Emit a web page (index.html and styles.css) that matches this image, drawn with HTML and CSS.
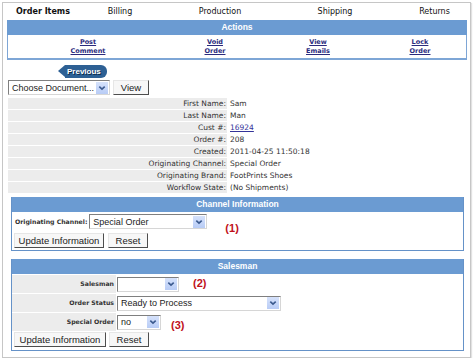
FILE: index.html
```html
<!DOCTYPE html>
<html lang="en">
<head>
    <meta charset="UTF-8">
    <title>Order Items</title>
    <link rel="stylesheet" href="styles.css">
</head>
<body>
    <div class="frame">
        <div class="tabs">
            <span class="tab tab-on">Order Items</span>
            <span class="tab">Billing</span>
            <span class="tab">Production</span>
            <span class="tab">Shipping</span>
            <span class="tab tab-last">Returns</span>
        </div>

        <div class="panel">
            <div class="panel-head">Actions</div>
            <div class="action-links">
                <a href="#">Post<br>Comment</a>
                <a href="#">Void<br>Order</a>
                <a href="#">View<br>Emails</a>
                <a href="#">Lock<br>Order</a>
            </div>
        </div>

        <div class="prev-row">
            <span class="prev"><span class="prev-tip"></span><span class="prev-body">Previous</span></span>
        </div>

        <div class="doc-row">
            <div class="dd dd-doc">
                <span>Choose Document...</span>
                <span class="dd-btn"><svg width="8" height="8" viewBox="0 0 8 8"><path d="M1.3 2.6 L4 5.2 L6.7 2.6" fill="none" stroke="#3b5a8e" stroke-width="1.6"/></svg></span>
            </div>
            <button class="btn btn-view">View</button>
        </div>

        <div class="info">
            <span class="k">First Name:</span><span class="v">Sam</span>
            <span class="k">Last Name:</span><span class="v">Man</span>
            <span class="k">Cust #:</span><span class="v"><a href="#" class="cust">16924</a></span>
            <span class="k">Order #:</span><span class="v">208</span>
            <span class="k">Created:</span><span class="v">2011-04-25 11:50:18</span>
            <span class="k">Originating Channel:</span><span class="v">Special Order</span>
            <span class="k">Originating Brand:</span><span class="v">FootPrints Shoes</span>
            <span class="k">Workflow State:</span><span class="v">(No Shipments)</span>
        </div>

        <!-- channel -->
        <div class="box box-channel">
            <div class="panel-head">Channel Information</div>
            <div class="channel-body">
                <span class="field-label">Originating Channel:</span>
                <div class="dd dd-channel">
                    <span>Special Order</span>
                    <span class="dd-btn"><svg width="8" height="8" viewBox="0 0 8 8"><path d="M1.3 2.6 L4 5.2 L6.7 2.6" fill="none" stroke="#3b5a8e" stroke-width="1.6"/></svg></span>
                </div>
                <span class="mark mark-1">(1)</span>
                <div class="btn-row">
                    <button class="btn btn-update">Update Information</button>
                    <button class="btn btn-reset">Reset</button>
                </div>
            </div>
        </div>

        <!-- salesman -->
        <div class="box box-sales">
            <div class="panel-head">Salesman</div>
            <div class="sales-body">
                <span class="s-label">Salesman</span>
                <div class="s-ctrl">
                    <div class="dd dd-sales">
                        <span></span>
                        <span class="dd-btn"><svg width="8" height="8" viewBox="0 0 8 8"><path d="M1.3 2.6 L4 5.2 L6.7 2.6" fill="none" stroke="#3b5a8e" stroke-width="1.6"/></svg></span>
                    </div>
                    <span class="mark mark-2">(2)</span>
                </div>

                <span class="s-label">Order Status</span>
                <div class="s-ctrl">
                    <div class="dd dd-status">
                        <span>Ready to Process</span>
                        <span class="dd-btn"><svg width="8" height="8" viewBox="0 0 8 8"><path d="M1.3 2.6 L4 5.2 L6.7 2.6" fill="none" stroke="#3b5a8e" stroke-width="1.6"/></svg></span>
                    </div>
                </div>

                <span class="s-label">Special Order</span>
                <div class="s-ctrl">
                    <div class="dd dd-special">
                        <span>no</span>
                        <span class="dd-btn"><svg width="8" height="8" viewBox="0 0 8 8"><path d="M1.3 2.6 L4 5.2 L6.7 2.6" fill="none" stroke="#3b5a8e" stroke-width="1.6"/></svg></span>
                    </div>
                    <span class="mark mark-3">(3)</span>
                </div>

                <div class="btn-row btn-row-sales">
                    <button class="btn btn-update2">Update Information</button>
                    <button class="btn btn-reset">Reset</button>
                </div>
            </div>
        </div>
    </div>
</body>
</html>
```

FILE: styles.css
```css
* {
    margin: 0;
    padding: 0;
    box-sizing: border-box;
}

body {
    background: #fff;
    font-family: 'DejaVu Sans', Verdana, sans-serif;
    color: #333;
}

.frame {
    margin: 2px 0 0 2px;
    width: 469px;
    height: 356px;
    border: 1px solid #c6c6c6;
    box-shadow: 1px 1px 1px #e2e2e2;
    padding: 0 3px 0 4px;
}

/* tabs */
.tabs {
    display: grid;
    grid-template-columns: 80px 74px 126px 104px 1fr;
    align-items: center;
    height: 17px;
    margin: 0 -3px 0 -4px;
    font-size: 8px;
    color: #111;
    text-align: center;
}

.tab-on {
    font-weight: bold;
}

.tab-last {
    padding-left: 12px;
}

/* panels */
.panel-head {
    background: #6b9bd2;
    color: #fff;
    font: bold 8.5px 'Liberation Sans', Arial, sans-serif;
    text-align: center;
    height: 15px;
    line-height: 15px;
}

.action-links {
    display: grid;
    grid-template-columns: 160px 94px 112px 1fr;
    height: 25px;
    padding-top: 3px;
    border: 1px solid #7ea6d6;
    border-top: 0;
    border-bottom-width: 2px;
    text-align: center;
    font: bold 6.5px/8.5px 'DejaVu Sans', Verdana, sans-serif;
}

.action-links a {
    color: #2b2b7d;
    text-decoration: underline;
}

/* previous button */
.prev-row {
    margin-top: 2px;
    height: 13px;
}

.prev {
    display: inline-flex;
    margin-left: 51px;
    height: 13px;
}

.prev-tip {
    width: 0;
    height: 0;
    border-top: 6.5px solid transparent;
    border-bottom: 6.5px solid transparent;
    border-right: 7px solid #2d6094;
}

.prev-body {
    background: #2d6094;
    border-radius: 0 6px 6px 0;
    color: #fff;
    font: bold 8px/13px 'Liberation Sans', Arial, sans-serif;
    padding: 0 6px 0 2px;
    text-shadow: 1px 1px 0 #0c2a4a;
}

/* selects & buttons */
.doc-row {
    display: flex;
    gap: 3px;
    margin: 5px 0 0 1px;
}

.dd {
    display: flex;
    align-items: center;
    justify-content: space-between;
    height: 15px;
    padding-left: 3px;
    background: #fff;
    border: 1px solid;
    border-color: #7f7f7f #d6d6d6 #d6d6d6 #7f7f7f;
    font: 9px 'Liberation Sans', Arial, sans-serif;
    color: #222;
    white-space: nowrap;
}

.dd-btn {
    display: flex;
    align-items: center;
    justify-content: center;
    width: 12px;
    height: 12px;
    margin-right: 1px;
    background: linear-gradient(#d6e2fb, #b8ccf6);
}

.dd-doc { width: 102px; }
.dd-channel { width: 118px; }
.dd-sales { width: 62px; }
.dd-status { width: 164px; }
.dd-special { width: 44px; }

.btn {
    height: 15px;
    padding: 0 2px;
    background: #f7f7f7;
    border: 1px solid;
    border-color: #e6e6e6 #4d4d4d #4d4d4d #e6e6e6;
    font: 9.5px 'Liberation Sans', Arial, sans-serif;
    color: #222;
    white-space: nowrap;
}

.btn-view { width: 36px; }
.btn-update { width: 90px; }
.btn-update2 { width: 92px; }
.btn-reset { width: 40px; }

/* order info */
.info {
    display: grid;
    grid-template-columns: 219px 1fr;
    grid-auto-rows: 11px;
    row-gap: 1px;
    margin: 3px 0 0 1px;
    font-size: 7.5px;
    line-height: 11px;
    color: #333;
}

.k {
    background: #ececec;
    text-align: right;
    padding-right: 1px;
}

.v {
    padding-left: 3px;
}

.cust {
    color: #333399;
}

/* boxes */
.box {
    margin: 4px 3px 0 4px;
    border: 1px solid #6592c8;
    border-top: 0;
}

.box-sales {
    margin-top: 8px;
}

.channel-body {
    display: grid;
    grid-template-columns: auto auto 1fr;
    grid-template-rows: 19px 19px;
    align-items: center;
    height: 38px;
    padding: 0 2px;
}

.field-label {
    grid-column: 1;
    grid-row: 1;
    margin-left: 1px;
    padding-right: 2px;
    font: bold 6.2px 'DejaVu Sans', Verdana, sans-serif;
    color: #333;
}

.dd-channel {
    grid-column: 2;
    grid-row: 1;
}

.mark {
    font: bold 11px 'Liberation Sans', Arial, sans-serif;
    color: #c0101a;
}

.mark-1 {
    grid-column: 3;
    grid-row: 1 / span 2;
    align-self: start;
    margin: 10px 0 0 18px;
}

.mark-2 { margin-left: 14px; margin-top: -2px; }
.mark-3 { margin-left: 10px; margin-top: 6px; }

.btn-row {
    grid-column: 1 / 3;
    grid-row: 2;
    display: flex;
    gap: 4px;
}

.sales-body {
    display: grid;
    grid-template-columns: 104px 1fr;
    grid-template-rows: 18px 18px 18px 16px;
    row-gap: 1px;
    padding: 1px 0 2px;
}

.s-label {
    background: #ececec;
    text-align: right;
    padding-right: 2px;
    font: bold 6.2px/18px 'DejaVu Sans', Verdana, sans-serif;
    color: #333;
}

.s-ctrl {
    display: flex;
    align-items: center;
    padding-left: 1px;
}

.btn-row-sales {
    grid-row: 4;
    padding-left: 2px;
    gap: 3px;
}
```
